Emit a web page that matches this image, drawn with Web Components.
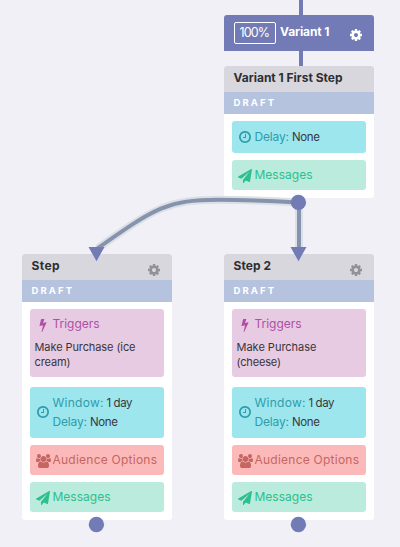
<!DOCTYPE html>
<html lang="en">
<head>
<meta charset="utf-8">
<title>Canvas flow</title>
<style>
html,body{margin:0;height:547px;overflow:hidden;background:#f1f0f6;font-family:Inter,"Open Sans",sans-serif;color:#333}
</style>
</head>
<body>
<flow-canvas>
  <flow-variant style="left:224px;top:15px" share="100%" label="Variant 1"></flow-variant>
  <flow-step style="left:224px;top:66px" label="Variant 1 First Step" label-width="109">
    <flow-block kind="time" icon="clock" style="height:32px"><flow-line><fit-text w="34.5">Delay:</fit-text><fit-text class="v" w="28">None</fit-text></flow-line></flow-block>
    <flow-block kind="message" icon="plane"><fit-text w="58">Messages</fit-text></flow-block>
  </flow-step>
  <flow-step style="left:22px;top:254px" label="Step" label-width="28" gear>
    <flow-block kind="trigger" icon="bolt" class="tall"><fit-text w="47">Triggers</fit-text><span slot="detail"><fit-text w="101">Make Purchase (ice</fit-text><br><fit-text w="36">cream)</fit-text></span></flow-block>
    <flow-block kind="time" icon="clock" style="height:51px"><flow-line><fit-text w="51">Window:</fit-text><fit-text class="v" w="26">1 day</fit-text></flow-line><flow-line><fit-text w="34.5">Delay:</fit-text><fit-text class="v" w="28">None</fit-text></flow-line></flow-block>
    <flow-block kind="audience" icon="users"><fit-text w="104.5">Audience Options</fit-text></flow-block>
    <flow-block kind="message" icon="plane"><fit-text w="58">Messages</fit-text></flow-block>
  </flow-step>
  <flow-step style="left:224px;top:254px" label="Step 2" label-width="37.5" gear>
    <flow-block kind="trigger" icon="bolt" class="tall"><fit-text w="47">Triggers</fit-text><span slot="detail"><fit-text w="80">Make Purchase</fit-text><br><fit-text w="44.5">(cheese)</fit-text></span></flow-block>
    <flow-block kind="time" icon="clock" style="height:51px"><flow-line><fit-text w="51">Window:</fit-text><fit-text class="v" w="26">1 day</fit-text></flow-line><flow-line><fit-text w="34.5">Delay:</fit-text><fit-text class="v" w="28">None</fit-text></flow-line></flow-block>
    <flow-block kind="audience" icon="users"><fit-text w="104.5">Audience Options</fit-text></flow-block>
    <flow-block kind="message" icon="plane"><fit-text w="58">Messages</fit-text></flow-block>
  </flow-step>
</flow-canvas>
<script>
const ICONS = {
  clock: ['0 0 1792 1792', 'M1024 544v448q0 14-9 23t-23 9h-320q-14 0-23-9t-9-23v-64q0-14 9-23t23-9h224v-352q0-14 9-23t23-9h64q14 0 23 9t9 23zm416 352q0-148-73-273t-198-198-273-73-273 73-198 198-73 273 73 273 198 198 273 73 273-73 198-198 73-273zm224 0q0 209-103 385.5t-279.5 279.5-385.5 103-385.5-103-279.5-279.5-103-385.5 103-385.5 279.5-279.5 385.5-103 385.5 103 279.5 279.5 103 385.5z'],
  cog: ['128 128 1536 1536', 'M1152 896q0-106-75-181t-181-75-181 75-75 181 75 181 181 75 181-75 75-181zm512-109v222q0 12-8 23t-20 13l-185 28q-19 54-39 91 35 50 107 138 10 12 10 25t-9 23q-27 37-99 108t-94 71q-12 0-26-9l-138-108q-44 23-91 38-16 136-29 186-7 28-36 28h-222q-14 0-24.5-8.5t-11.5-21.5l-28-184q-49-16-90-37l-141 107q-10 9-25 9-14 0-25-11-126-114-165-168-7-10-7-23 0-12 8-23 15-21 51-66.5t54-70.5q-27-50-41-99l-183-27q-13-2-21-12.5t-8-23.5v-222q0-12 8-23t19-13l186-28q14-46 39-92-40-57-107-138-10-12-10-24 0-10 9-23 26-36 98.5-107.5t94.5-71.5q13 0 26 10l138 107q44-23 91-38 16-136 29-186 7-28 36-28h222q14 0 24.5 8.5t11.5 21.5l28 184q49 16 90 37l142-107q9-9 24-9 13 0 25 10 129 119 165 170 7 8 7 22 0 12-8 23-15 21-51 66.5t-54 70.5q26 50 41 98l183 28q13 2 21 12.5t8 23.5z'],
  plane: ['0 0 1792 1792', 'M1764 11q33 24 27 64l-256 1536q-5 29-32 45-14 8-31 8-11 0-24-5l-453-185-242 295q-18 23-49 23-13 0-22-4-19-7-30.5-23.5t-11.5-36.5v-349l864-1059-1069 925-395-162q-37-14-40-55-2-40 32-59l1664-960q15-9 32-9 20 0 36 11z'],
  bolt: ['0 0 1792 1792', 'M1333 566q18 20 7 44l-540 1157q-13 25-42 25-4 0-14-2-17-5-25.5-19t-4.5-30l197-808-406 101q-4 1-12 1-18 0-31-11-18-15-13-39l201-825q4-14 16-23t28-9h328q19 0 32 12.5t13 29.5q0 8-5 18l-171 463 396-98q8-2 12-2 19 0 34 15z'],
  users: ['0 0 1920 1792', 'M593 896q-162 5-265 128h-134q-82 0-138-40.5t-56-118.5q0-353 124-353 6 0 43.5 21t97.5 42.5 119 21.5q67 0 133-23-5 37-5 66 0 139 81 256zm1071 637q0 120-73 189.5t-194 69.5h-874q-121 0-194-69.5t-73-189.5q0-53 3.5-103.5t14-109 26.5-108.5 43-97.5 62-81 85.5-53.5 111.5-20q10 0 43 21.5t73 48 107 48 135 21.5 135-21.5 107-48 73-48 43-21.5q61 0 111.5 20t85.5 53.5 62 81 43 97.5 26.5 108.5 14 109 3.5 103.5zm-1024-1277q0 106-75 181t-181 75-181-75-75-181 75-181 181-75 181 75 75 181zm704 384q0 159-112.5 271.5t-271.5 112.5-271.5-112.5-112.5-271.5 112.5-271.5 271.5-112.5 271.5 112.5 112.5 271.5zm576 225q0 78-56 118.5t-138 40.5h-134q-103-123-265-128 81-117 81-256 0-29-5-66 66 23 133 23 59 0 119-21.5t97.5-42.5 43.5-21q124 0 124 353zm-128-609q0 106-75 181t-181 75-181-75-75-181 75-181 181-75 181 75 75 181z']
};
const base = (render) => class extends HTMLElement {
  connectedCallback() {
    if (!this.shadowRoot) this.attachShadow({mode: 'open'}).innerHTML = render(this);
  }
};
const attr = (el, n) => el.getAttribute(n) || '';

customElements.define('flow-icon', base(el => {
  const [box, d] = ICONS[attr(el, 'name')];
  return `<style>:host{display:block;flex:none}svg{display:block;width:100%;height:100%;fill:currentColor}</style><svg viewBox="${box}"><path d="${d}"/></svg>`;
}));

customElements.define('flow-line', base(() => `<style>:host{display:flex;gap:3px;height:19px;line-height:19px;align-items:baseline}</style><slot></slot>`));

customElements.define('flow-canvas', base(() => `<style>
:host{display:block;position:relative;width:400px;height:547px;overflow:hidden}
svg{position:absolute;inset:0;pointer-events:none}
.over{z-index:2}
::slotted(*){position:absolute;z-index:1}
</style>
<svg width="400" height="547"><path d="M301 0V70" stroke="#727bb5" stroke-width="4"/></svg>
<slot></slot>
<svg class="over" width="400" height="547" fill="none">
<g stroke="#dcdfe5" stroke-width="8"><path d="M97.500 248.500C156 207 168 200 218 199.700Q252 200 298 202.500"/><path d="M299 203V249"/></g>
<g stroke="#8593ae" stroke-width="4"><path d="M97.500 248.500C156 207 168 200 218 199.700Q252 200 298 202.500"/><path d="M299 203V249"/></g>
<g fill="#727bb5"><circle cx="298.400" cy="202.400" r="7.700"/><path d="M88.500 247h16l-8 14.200zM290.500 247h16l-8 14.200z"/><circle cx="96.400" cy="524.500" r="7.700"/><circle cx="298.400" cy="524.500" r="7.700"/></g>
</svg>`));

customElements.define('flow-variant', base(el => `<style>
:host{display:flex;box-sizing:border-box;width:150px;height:36px;padding:0 12px 0 10px;align-items:center;background:#727bb5;color:#fff;border-radius:3px 3px 0 0;font-size:12px;line-height:20px}
.share{box-sizing:border-box;width:42px;height:22px;border:1px solid #fff;border-radius:2px;padding-left:4.500px;font-size:12.500px}
b{margin:-2px auto 0 4px;font-weight:700}
flow-icon{width:12px;height:12px;margin-top:3px}
</style><div class="share"><fit-text w="30.500">${attr(el, 'share')}</fit-text></div><b><fit-text w="49.500">${attr(el, 'label')}</fit-text></b><flow-icon name="cog"></flow-icon>`));

customElements.define('flow-step', base(el => `<style>
:host{display:block;width:150px;background:#fff;border-radius:3px;overflow:hidden}
header{display:flex;box-sizing:border-box;height:26px;padding:0 12px 2px 9.500px;align-items:center;justify-content:space-between;background:#d8d7de;font-size:12px;font-weight:700;color:#2e2e30}
header fit-text{margin-top:-2px}
flow-icon{width:12px;height:12px;margin-top:7px;color:#929296}
.state{height:22px;padding-left:9.500px;background:#b5c3df;color:#fff;font-size:9.500px;font-weight:700;line-height:22px}
.body{display:flex;flex-direction:column;gap:7px;padding:7px 8px 8px}
</style><header><fit-text w="${attr(el, 'label-width')}">${attr(el, 'label')}</fit-text>${el.hasAttribute('gear') ? '<flow-icon name="cog"></flow-icon>' : ''}</header>
<div class="state"><fit-text w="40.500">DRAFT</fit-text></div><div class="body"><slot></slot></div>`));

const KINDS = {time: ['#9de6ee', '#2c9dad'], message: ['#bbebdc', '#2bc08e'], trigger: ['#e7cbe2', '#b04fa6'], audience: ['#fcb9b9', '#c56662']};
const SIZES = {clock: '14px;height:14px;margin:0 2.5px 0 6px', plane: '14px;height:14px;margin:1px 2.5px 0 6px', bolt: '14px;height:14px;margin:1px 2.5px 0 6px', users: '15px;height:14px;margin:1px 1.5px 0 6px'};
customElements.define('flow-block', base(el => {
  const [bg, fg] = KINDS[attr(el, 'kind')], icon = attr(el, 'icon');
  return `<style>
:host{display:flex;flex-direction:column;justify-content:center;box-sizing:border-box;height:30px;border-radius:3px;background:${bg};color:${fg};font-size:12px}
:host(.tall){height:68px;justify-content:flex-start;padding-top:6px;margin-bottom:3px}
:host([kind="time"]){padding-bottom:1px}
.row{display:flex;align-items:center;height:18px}
flow-icon{width:${SIZES[icon]}}
.text{display:block;line-height:18px;margin-top:-1px}
::slotted(span){display:block;margin:7px 0 0 4.500px;color:#38343a;font-size:11px;line-height:15px}
</style><div class="row"><flow-icon name="${icon}"></flow-icon><div class="text"><slot></slot></div></div><slot name="detail"></slot>`;
}));

/* Tracks a single line of text to the advance width given by "w". */
customElements.define('fit-text', class extends HTMLElement {
  connectedCallback() {
    if (this.shadowRoot) return;
    this.attachShadow({mode: 'open'}).innerHTML = '<style>:host{display:inline-block;white-space:nowrap}:host(.v){color:#38383c;font-size:11.500px}</style><slot></slot>';
    const natural = this.getBoundingClientRect().width, n = this.textContent.length;
    const spacing = (parseFloat(this.getAttribute('w')) - natural) / (n - 1);
    this.style.letterSpacing = spacing.toFixed(3) + 'px';
    this.style.marginRight = (-spacing).toFixed(3) + 'px';
  }
});
</script>
</body>
</html>
